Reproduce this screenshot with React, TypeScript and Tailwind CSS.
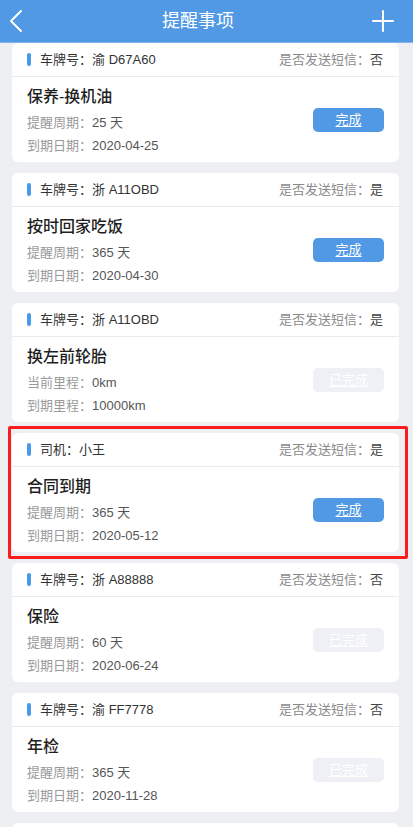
import React from "react";

type Reminder = {
  ownerLabel: string;
  owner: string;
  sms: string;
  title: string;
  line1: [string, string];
  line2: [string, string];
  done: boolean;
  marked?: boolean;
};

const reminders: Reminder[] = [
  {
    ownerLabel: "车牌号：",
    owner: "渝 D67A60",
    sms: "否",
    title: "保养-换机油",
    line1: ["提醒周期：", "25 天"],
    line2: ["到期日期：", "2020-04-25"],
    done: false,
  },
  {
    ownerLabel: "车牌号：",
    owner: "浙 A11OBD",
    sms: "是",
    title: "按时回家吃饭",
    line1: ["提醒周期：", "365 天"],
    line2: ["到期日期：", "2020-04-30"],
    done: false,
  },
  {
    ownerLabel: "车牌号：",
    owner: "浙 A11OBD",
    sms: "是",
    title: "换左前轮胎",
    line1: ["当前里程：", "0km"],
    line2: ["到期里程：", "10000km"],
    done: true,
  },
  {
    ownerLabel: "司机：",
    owner: "小王",
    sms: "是",
    title: "合同到期",
    line1: ["提醒周期：", "365 天"],
    line2: ["到期日期：", "2020-05-12"],
    done: false,
    marked: true,
  },
  {
    ownerLabel: "车牌号：",
    owner: "浙 A88888",
    sms: "否",
    title: "保险",
    line1: ["提醒周期：", "60 天"],
    line2: ["到期日期：", "2020-06-24"],
    done: true,
  },
  {
    ownerLabel: "车牌号：",
    owner: "渝 FF7778",
    sms: "否",
    title: "年检",
    line1: ["提醒周期：", "365 天"],
    line2: ["到期日期：", "2020-11-28"],
    done: true,
  },
];

function ReminderCard({ item }: { item: Reminder }) {
  return (
    <div className="relative">
      {/* annotation box */}
      {item.marked && (
        <div className="absolute -left-[4px] -top-[7px] -right-[9px] -bottom-[7px] border-[3px] border-[#fb1d1d] rounded-[2px] pointer-events-none" />
      )}
      <div className="bg-white rounded-[6px]">
        {/* Header */}
        <div className="h-[34px] flex items-center justify-between pl-[15px] pr-[16px] border-b border-[#e9e9ee] text-[13px]">
          <div className="flex items-center">
            <span className="w-[4px] h-[13px] rounded-full bg-[#4a98ea] mr-[9px]" />
            <span className="text-[#333]">{item.ownerLabel}</span>
            <span className="text-[#333]">{item.owner}</span>
          </div>
          <div>
            <span className="text-[#8a8a8a]">是否发送短信：</span>
            <span className="text-[#444]">{item.sms}</span>
          </div>
        </div>

        {/* Body */}
        <div className="h-[85px] flex items-center justify-between pl-[15px] pr-[15px]">
          <div className="self-start pt-[9px]">
            <div className="text-[16px] leading-[22px] font-medium text-[#1f1f1f]">{item.title}</div>
            <div className="mt-[3px] text-[13px] leading-[23px]">
              <span className="text-[#9a9a9a]">{item.line1[0]}</span>
              <span className="text-[#555]">{item.line1[1]}</span>
            </div>
            <div className="text-[13px] leading-[23px]">
              <span className="text-[#9a9a9a]">{item.line2[0]}</span>
              <span className="text-[#555]">{item.line2[1]}</span>
            </div>
          </div>
          {item.done ? (
            <button className="w-[71px] h-[24px] rounded-[5px] bg-[#eef0f6] text-white text-[13px] underline underline-offset-2">
              已完成
            </button>
          ) : (
            <button className="w-[71px] h-[24px] rounded-[5px] bg-[#5199e4] text-white text-[13px] underline underline-offset-2">
              完成
            </button>
          )}
        </div>
      </div>
    </div>
  );
}

export default function App() {
  return (
    <div
      className="w-[413px] h-[827px] overflow-hidden bg-[#eeeff3] flex flex-col"
      style={{ fontFamily: '"Liberation Sans", "Noto Sans CJK SC", sans-serif' }}
    >
      {/* Nav bar */}
      <div className="h-[43px] shrink-0 bg-[#5199e4] flex items-center justify-between px-[8px] border-b border-[#7fb4ec]">
        <svg width="16" height="24" viewBox="0 0 16 24" fill="none">
          <path d="M13 2 L3 12 L13 22" stroke="white" strokeWidth="2" strokeLinecap="round" strokeLinejoin="round" />
        </svg>
        <div className="text-white text-[18px]">提醒事项</div>
        <svg width="22" height="22" viewBox="0 0 22 22" fill="none" className="mr-[11px]">
          <path d="M11 1 V21 M1 11 H21" stroke="white" strokeWidth="2" strokeLinecap="round" />
        </svg>
      </div>

      {/* List */}
      <div className="flex flex-col gap-[11px] pl-3 pr-[14px]">
        {reminders.map((item, index) => (
          <ReminderCard key={index} item={item} />
        ))}
        {/* next card, scrolled below the fold */}
        <div className="h-[34px] shrink-0 bg-white rounded-[6px]" />
      </div>
    </div>
  );
}
